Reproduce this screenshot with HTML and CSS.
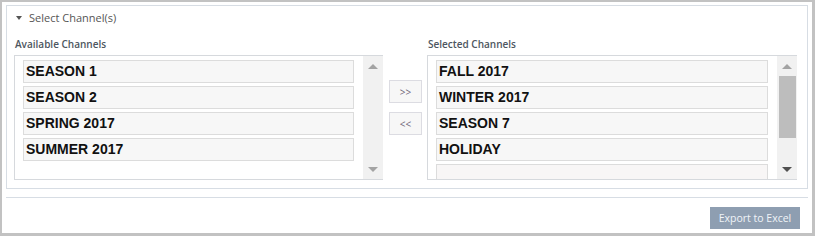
FILE: index.html
```html
<!DOCTYPE html>
<html>
<head>
  <title>Select Channels</title>
  <link rel="stylesheet" href="styles.css">
</head>
<body>
  <div class="frame">
    <div class="panel">
      <div class="panel-head">
        <span class="caret"></span>
        <span class="panel-title">Select Channel(s)</span>
      </div>

      <div class="picker">
        <div class="col col-avail">
          <div class="col-label">Available Channels</div>
          <div class="list">
            <div class="items">
              <div class="item">SEASON 1</div>
              <div class="item">SEASON 2</div>
              <div class="item">SPRING 2017</div>
              <div class="item">SUMMER 2017</div>
            </div>
            <div class="scroll">
              <div class="arrow-box"><span class="arrow up"></span></div>
              <div class="track"></div>
              <div class="arrow-box"><span class="arrow down"></span></div>
            </div>
          </div>
        </div>

        <div class="moves">
          <button type="button" class="move">&gt;&gt;</button>
          <button type="button" class="move">&lt;&lt;</button>
        </div>

        <div class="col col-sel">
          <div class="col-label">Selected Channels</div>
          <div class="list">
            <div class="items">
              <div class="item">FALL 2017</div>
              <div class="item">WINTER 2017</div>
              <div class="item">SEASON 7</div>
              <div class="item">HOLIDAY</div>
              <!-- next row is scrolled out of view -->
              <div class="item item-faded"></div>
            </div>
            <div class="scroll">
              <div class="arrow-box"><span class="arrow up"></span></div>
              <div class="thumb"></div>
              <div class="track"></div>
              <div class="arrow-box"><span class="arrow down dark"></span></div>
            </div>
          </div>
        </div>
      </div>
    </div>

    <div class="footer">
      <button type="button" class="export">Export to Excel</button>
    </div>
  </div>
</body>
</html>
```

FILE: styles.css
```css
body {
  margin: 0;
  padding: 0;
  font-family: "Open Sans", "Liberation Sans", Arial, sans-serif;
}

.frame {
  width: 815px;
  height: 236px;
  box-sizing: border-box;
  border-style: solid;
  border-color: #c2c2c2;
  border-width: 2px 3px 3px 2px;
  background-color: #ffffff;
  overflow: hidden;
}

.panel {
  margin: 3px 4px 0 4px;
  height: 184px;
  box-sizing: border-box;
  border: 1px solid #d7dde4;
  padding: 0 10px 0 7px;
}

.panel-head {
  display: flex;
  align-items: center;
  height: 14px;
  padding: 5px 0 12px 2px;
}

.caret {
  width: 0;
  height: 0;
  border-left: 3px solid transparent;
  border-right: 3px solid transparent;
  border-top: 4px solid #555555;
  margin-right: 7px;
}

.panel-title {
  font-size: 11px;
  line-height: 14px;
  color: #555555;
}

.picker {
  display: flex;
}

.col-avail {
  width: 369px;
}

.col-sel {
  width: 370px;
}

.col-label {
  font-size: 10px;
  font-weight: 600;
  line-height: 14px;
  color: #4d5660;
  padding-left: 1px;
  margin-bottom: 4px;
}

.list {
  display: flex;
  height: 125px;
  box-sizing: border-box;
  border: 1px solid #d6d9dd;
  border-right: none;
}

.items {
  flex: 1;
  display: flex;
  flex-direction: column;
  gap: 3px;
  padding: 4px 9px 0 8px;
  overflow: hidden;
}

.item {
  flex-shrink: 0;
  height: 23px;
  box-sizing: border-box;
  border: 1px solid #dcdcdc;
  background-color: #f7f7f7;
  padding-left: 2px;
  font-family: "Liberation Sans", Arial, sans-serif;
  font-size: 14px;
  font-weight: bold;
  line-height: 21px;
  color: #111111;
}

.item-faded {
  background-color: #f8f6f6;
}

.scroll {
  width: 20px;
  display: flex;
  flex-direction: column;
  background-color: #f1f1f1;
}

.arrow-box {
  height: 20px;
  display: flex;
  justify-content: center;
  align-items: center;
}

.track {
  flex: 1;
}

.thumb {
  height: 62px;
  margin: 0 1px 0 2px;
  background-color: #bdbdbd;
}

.arrow {
  width: 0;
  height: 0;
  border-left: 5px solid transparent;
  border-right: 5px solid transparent;
}

.arrow.up {
  border-bottom: 5px solid #a3a3a3;
}

.arrow.down {
  border-top: 5px solid #a3a3a3;
}

.arrow.down.dark {
  border-top-color: #505050;
}

.moves {
  width: 44px;
  display: flex;
  flex-direction: column;
  gap: 9px;
  padding-top: 43px;
  box-sizing: border-box;
}

.move {
  width: 33px;
  height: 23px;
  margin-left: 6px;
  padding: 0;
  border: 1px solid #dcdce2;
  background-color: #f7f7f7;
  font-family: "Open Sans", "Liberation Sans", Arial, sans-serif;
  font-size: 10px;
  color: #6f6678;
  cursor: pointer;
}

.footer {
  margin: 8px 4px 0 4px;
  border-top: 1px solid #d7dde4;
  padding: 9px 8px 0 0;
  display: flex;
  justify-content: flex-end;
}

.export {
  width: 90px;
  height: 22px;
  border: none;
  padding: 0;
  background-color: #8e9eb1;
  color: #f0f4f8;
  font-family: "Open Sans", "Liberation Sans", Arial, sans-serif;
  font-size: 10.5px;
  cursor: pointer;
}
```
